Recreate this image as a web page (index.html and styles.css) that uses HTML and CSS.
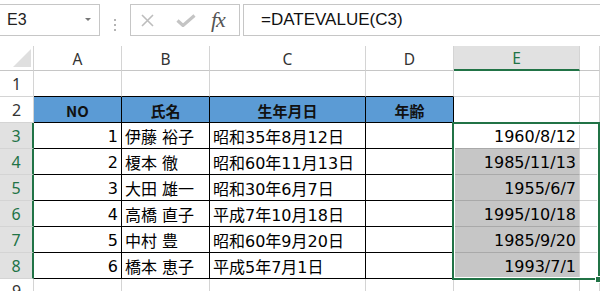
FILE: index.html
```html
<!DOCTYPE html>
<html lang="ja">
<head>
    <meta charset="UTF-8">
    <title>DATEVALUE</title>
    <link rel="stylesheet" href="styles.css">
</head>
<body>
    <div class="toolbar">
        <div class="namebox"><span>E3</span><span class="caret"></span></div>
        <div class="grip"><i></i><i></i><i></i></div>
        <div class="fxbox">
            <svg class="ico-x" width="13" height="13" viewBox="0 0 13 13"><path d="M1 1L12 12M12 1L1 12" stroke="#bdbdbd" stroke-width="1.6" fill="none"/></svg>
            <svg class="ico-ok" width="20" height="13" viewBox="0 0 20 13"><path d="M1.5 6.5L7 11.5L18.5 1.5" stroke="#c4c4c4" stroke-width="3.2" fill="none"/></svg>
            <span class="fx">fx</span>
        </div>
        <div class="formula">=DATEVALUE(C3)</div>
    </div>

    <div class="sheet">
        <div class="corner"><i></i></div>
        <div class="colhead">A</div>
        <div class="colhead">B</div>
        <div class="colhead">C</div>
        <div class="colhead">D</div>
        <div class="colhead on">E</div>
        <div class="colhead"></div>

        <div class="rowhead">1</div>
        <div class="cell top"></div>
        <div class="cell top"></div>
        <div class="cell top"></div>
        <div class="cell top"></div>
        <div class="cell"></div>
        <div class="cell"></div>

        <div class="rowhead">2</div>
        <div class="cell t hd">NO</div>
        <div class="cell t hd">氏名</div>
        <div class="cell t hd">生年月日</div>
        <div class="cell t hd">年齢</div>
        <div class="cell"></div>
        <div class="cell"></div>

        <div class="rowhead on">3</div>
        <div class="cell t num">1</div>
        <div class="cell t">伊藤 裕子</div>
        <div class="cell t">昭和35年8月12日</div>
        <div class="cell t"></div>
        <div class="cell num date">1960/8/12</div>
        <div class="cell"></div>

        <div class="rowhead on">4</div>
        <div class="cell t num">2</div>
        <div class="cell t">榎本 徹</div>
        <div class="cell t">昭和60年11月13日</div>
        <div class="cell t"></div>
        <div class="cell num date sh">1985/11/13</div>
        <div class="cell"></div>

        <div class="rowhead on">5</div>
        <div class="cell t num">3</div>
        <div class="cell t">大田 雄一</div>
        <div class="cell t">昭和30年6月7日</div>
        <div class="cell t"></div>
        <div class="cell num date sh">1955/6/7</div>
        <div class="cell"></div>

        <div class="rowhead on">6</div>
        <div class="cell t num">4</div>
        <div class="cell t">高橋 直子</div>
        <div class="cell t">平成7年10月18日</div>
        <div class="cell t"></div>
        <div class="cell num date sh">1995/10/18</div>
        <div class="cell"></div>

        <div class="rowhead on">7</div>
        <div class="cell t num">5</div>
        <div class="cell t">中村 豊</div>
        <div class="cell t">昭和60年9月20日</div>
        <div class="cell t"></div>
        <div class="cell num date sh">1985/9/20</div>
        <div class="cell"></div>

        <div class="rowhead on">8</div>
        <div class="cell t num">6</div>
        <div class="cell t">橋本 恵子</div>
        <div class="cell t">平成5年7月1日</div>
        <div class="cell t"></div>
        <div class="cell num date sh">1993/7/1</div>
        <div class="cell"></div>

        <div class="rowhead">9</div>
        <div class="cell"></div>
        <div class="cell"></div>
        <div class="cell"></div>
        <div class="cell"></div>
        <div class="cell"></div>
        <div class="cell"></div>

        <!-- selection E3:E8 -->
        <div class="sel"><span class="handle"></span></div>
    </div>
</body>
</html>
```

FILE: styles.css
```css
* {
    box-sizing: border-box;
}
body {
    margin: 0;
    width: 600px;
    height: 291px;
    overflow: hidden;
    background: #fff;
    color: #222;
    font-family: "Noto Sans", "Liberation Sans", sans-serif;
}

/* formula bar */
.toolbar {
    display: flex;
    height: 46px;
    padding-top: 4px;
}
.namebox {
    width: 101px;
    height: 32px;
    margin-left: -1px;
    border: 1px solid #c6c6c6;
    display: flex;
    align-items: center;
    justify-content: space-between;
    padding: 0 8px 0 7px;
    font-family: "Liberation Sans", sans-serif;
    font-size: 16px;
    color: #222;
}
.caret {
    border-left: 3px solid transparent;
    border-right: 3px solid transparent;
    border-top: 3px solid #777;
    margin-top: -2px;
}
.grip {
    width: 30px;
    display: flex;
    flex-direction: column;
    align-items: center;
    justify-content: center;
    gap: 3px;
}
.grip i {
    width: 2px;
    height: 2px;
    background: #b4b4b4;
}
.fxbox {
    width: 110px;
    height: 32px;
    border: 1px solid #c6c6c6;
    display: flex;
    align-items: center;
    padding-left: 10px;
}
.ico-ok {
    margin-left: 22px;
}
.fx {
    margin-left: 15px;
    font-family: "Liberation Serif", serif;
    font-style: italic;
    font-size: 22px;
    color: #555;
    letter-spacing: -1px;
}
.formula {
    flex: 1;
    height: 32px;
    margin-left: 3px;
    margin-right: -2px;
    border: 1px solid #c6c6c6;
    padding-left: 17px;
    display: flex;
    align-items: center;
    font-family: "Liberation Sans", sans-serif;
    font-size: 17px;
    color: #111;
}

/* sheet grid */
.sheet {
    position: relative;
    display: grid;
    grid-template-columns: 34px 88px 88px 156px 88px 126px 1fr;
    grid-template-rows: 25px repeat(8, 26px) 1fr;
    height: 245px;
}
.corner, .colhead, .rowhead, .cell {
    border-right: 1px solid #d4d4d4;
    border-bottom: 1px solid #d4d4d4;
}
.corner {
    border-bottom-color: #c6c6c6;
    display: flex;
    align-items: flex-end;
    justify-content: flex-end;
    padding: 0 2px 3px 0;
}
.corner i {
    width: 18px;
    height: 18px;
    background: #dfdfdf;
    clip-path: polygon(100% 0, 100% 100%, 0 100%);
}
.colhead {
    border-bottom-color: #c6c6c6;
    display: flex;
    align-items: center;
    justify-content: center;
    font-size: 15.5px;
    color: #333;
    padding-top: 1px;
}
.colhead.on {
    background: #e1e1e1;
    color: #217346;
    border-bottom: 2px solid #217346;
}
.rowhead {
    display: flex;
    align-items: center;
    justify-content: center;
    font-size: 16px;
    color: #333;
    padding-top: 1px;
}
.rowhead.on {
    background: #e1e1e1;
    color: #217346;
    border-right: 2px solid #217346;
}

.cell {
    display: flex;
    align-items: center;
    padding: 1px 3px 0 3px;
    font-family: "DejaVu Sans", "Noto Sans CJK JP", sans-serif;
    font-size: 16px;
    color: #000;
    white-space: nowrap;
    overflow: hidden;
}
.cell.top {
    border-bottom-color: #000;
}
.cell.t {
    border-right-color: #000;
    border-bottom-color: #000;
}
.cell.hd {
    background: #5b9bd5;
    justify-content: center;
    font-family: "Noto Sans CJK JP", sans-serif;
    font-weight: bold;
    font-size: 15px;
    color: #111;
}
.cell.num {
    justify-content: flex-end;
}
.cell.date {
    border-bottom-color: #a9a9a9;
}
.cell.sh {
    background: #c6c6c6;
}

/* selection outline over E3:E8 */
.sel {
    position: absolute;
    grid-column: 6;
    grid-row: 4 / 10;
    top: -1px;
    bottom: -1px;
    left: -2px;
    right: 0;
    border: 2px solid #217346;
    box-shadow: inset 0 0 0 1px #fff;
}
.handle {
    position: absolute;
    right: -4px;
    bottom: -5px;
    width: 7px;
    height: 7px;
    background: #217346;
    border: 1px solid #fff;
}
```
